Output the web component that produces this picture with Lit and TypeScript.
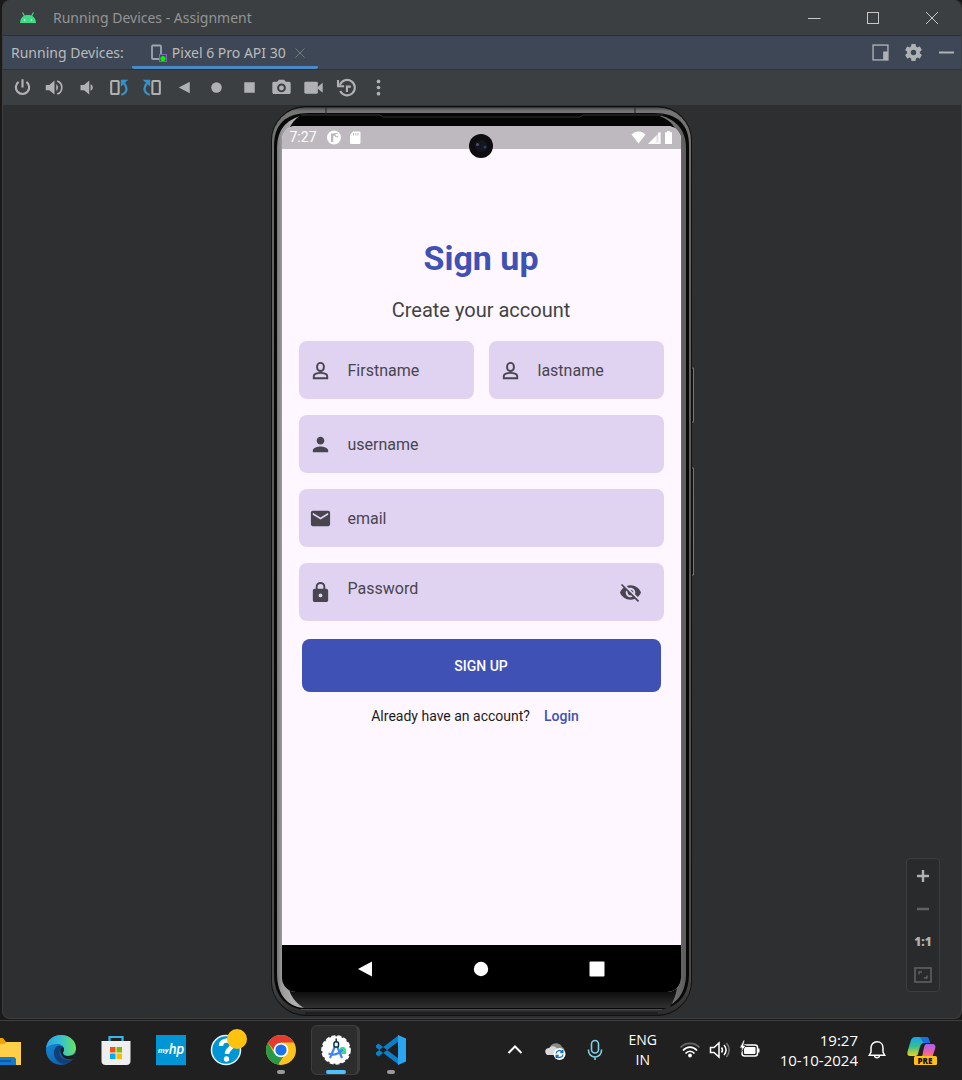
import { LitElement, html, svg, css } from "lit";
import { customElement, property, state } from "lit/decorators.js";

const toolIcons: Record<string, unknown> = {
  Power: svg`<path d="M7.500 5.700A7.600 7.600 0 1 0 16.500 5.700M12 2.500V12" fill="none" stroke="currentColor" stroke-width="2.500"/>`,
  "Volume up": svg`<path d="M2 9v6h4l6 5V4L6 9H2z"/><path d="M14 8.300v7.400c1.300-.7 2-2.100 2-3.700s-.7-3-2-3.700z"/><path d="M15 4.600c3.300.8 5.300 3.900 5.300 7.400s-2 6.600-5.300 7.400" fill="none" stroke="currentColor" stroke-width="2"/>`,
  "Volume down": svg`<path d="M4 9v6h4l6 5V4L8 9H4z"/><path d="M15.500 8.300v7.400c1.600-.7 2.600-2.100 2.600-3.700s-1-3-2.600-3.700z"/>`,
  "Rotate left": svg`<rect x="2.500" y="4.500" width="8.500" height="15" rx="1" fill="none" stroke="currentColor" stroke-width="2.400"/><path d="M14 20.300c4-1 6-3.300 6-6.800 0-2.600-1-4.500-3-6.500" fill="none" stroke="#3592c4" stroke-width="2.600"/><path d="M13.500 3.200H22L13.500 11z" fill="#3592c4"/>`,
  "Rotate right": svg`<rect x="13" y="4.500" width="8.500" height="15" rx="1" fill="none" stroke="currentColor" stroke-width="2.400"/><path d="M10 20.300c-4-1-6-3.300-6-6.800 0-2.600 1-4.500 3-6.500" fill="none" stroke="#3592c4" stroke-width="2.600"/><path d="M10.500 3.200H2L10.500 11z" fill="#3592c4"/>`,
  Back: svg`<path d="M18 5.500v13L5.500 12z"/>`,
  Home: svg`<circle cx="12" cy="12" r="6"/>`,
  Overview: svg`<rect x="6" y="6" width="12" height="12"/>`,
  Screenshot: svg`<path d="M9 3 7 5.500H3.500C2 5.500 1.500 6.300 1.500 7.500v10c0 1.300.7 2 2 2h17c1.300 0 2-.7 2-2v-10c0-1.200-.7-2-2-2H17L15 3zm3 4.500a5 5 0 1 1 0 10 5 5 0 0 1 0-10z" fill-rule="evenodd"/><circle cx="12" cy="12.500" r="2.800"/>`,
  Record: svg`<rect x="1.500" y="5.500" width="15.500" height="13.500" rx="1.500"/><path d="M17 11l5.500-4.500v11.500l-5.500-4.500z"/>`,
  Snapshots: svg`<path d="M4.500 9a8.800 8.800 0 1 1 .3 7M2.300 3.500v7h7M12.500 17v-6H17" fill="none" stroke="currentColor" stroke-width="2.400"/>`,
  More: svg`<circle cx="12" cy="5" r="2.100"/><circle cx="12" cy="12" r="2.100"/><circle cx="12" cy="19" r="2.100"/>`,
};

const fieldIcons: Record<string, unknown> = {
  outline: svg`<g fill="none" stroke="currentColor" stroke-width="2"><rect x="8.500" y="4" width="7" height="8.500" rx="3.500"/><path d="M5 20v-2.300c0-2 3.800-3.200 7-3.200s7 1.200 7 3.200V20z"/></g>`,
  person: svg`<path d="M12 12c2.200 0 4-1.800 4-4s-1.800-4-4-4-4 1.800-4 4 1.800 4 4 4zm0 2c-2.700 0-8 1.300-8 4v2h16v-2c0-2.700-5.300-4-8-4z"/>`,
  mail: svg`<path d="M20 4H4c-1.100 0-2 .9-2 2v12c0 1.100.9 2 2 2h16c1.100 0 2-.9 2-2V6c0-1.100-.9-2-2-2zm0 4-8 5-8-5V6l8 5 8-5v2z"/>`,
  lock: svg`<path d="M18 8h-1V6A5 5 0 0 0 7 6v2H6c-1.100 0-2 .9-2 2v10c0 1.100.9 2 2 2h12c1.100 0 2-.9 2-2V10c0-1.100-.9-2-2-2zm-6 9a2 2 0 1 1 0-4 2 2 0 0 1 0 4zM9 8V6a3 3 0 0 1 6 0v2z"/>`,
};

@customElement("form-field")
class FormField extends LitElement {
  @property() name = "";
  @property() icon = "person";
  @property({ type: Boolean }) secret = false;
  @state() private shown = false;

  static styles = css`
    :host { display: block; flex: 1; min-width: 0; }
    .field {
      display: flex; align-items: center; height: 58px; box-sizing: border-box;
      padding: 0 22px 0 10px; border-radius: 8px; background: #dfd3f1; color: #49454f;
    }
    .icon { width: 23px; height: 23px; flex: none; fill: currentColor; }
    .box {
      flex: 1; min-width: 0; height: 40px; margin: 0 0 0 16px; padding: 0; border: 0; outline: 0;
      background: none; color: #49454f; font: 16px Roboto, sans-serif;
    }
    .box::placeholder { color: #49454f; opacity: 1; }
    .secret .box { padding-bottom: 8px; }
    .eye { display: flex; padding: 0; border: 0; background: none; color: inherit; }
  `;

  render() {
    return html`<label class="field ${this.secret ? "secret" : ""}">
      <svg class="icon" viewBox="0 0 24 24" aria-hidden="true">${fieldIcons[this.icon]}</svg>
      <input class="box" aria-label=${this.name} placeholder=${this.name}
        type=${this.secret && !this.shown ? "password" : "text"} />
      ${this.secret
        ? html`<button class="eye" type="button" aria-label="Toggle password visibility" @click=${() => (this.shown = !this.shown)}>
            <svg class="icon" viewBox="0 0 24 24"><path d="M12 7c2.760 0 5 2.240 5 5 0 .65-.13 1.260-.36 1.830l2.920 2.920c1.510-1.260 2.700-2.890 3.430-4.750-1.730-4.390-6-7.500-11-7.500-1.400 0-2.740.25-3.980.7l2.160 2.160C10.740 7.130 11.350 7 12 7zM2 4.270l2.280 2.280.46.46C3.080 8.300 1.780 10.020 1 12c1.730 4.390 6 7.500 11 7.500 1.550 0 3.030-.3 4.380-.84l.42.42L19.730 22 21 20.730 3.270 3 2 4.270zM7.530 9.800l1.550 1.550c-.05.21-.08.43-.08.65 0 1.660 1.340 3 3 3 .22 0 .44-.03.65-.08l1.550 1.550c-.67.33-1.410.53-2.200.53-2.760 0-5-2.240-5-5 0-.79.2-1.530.53-2.200zm4.310-.78 3.150 3.150.02-.16c0-1.660-1.340-3-3-3l-.17.01z"/></svg>
          </button>`
        : ""}
    </label>`;
  }
}

@customElement("phone-device")
class PhoneDevice extends LitElement {
  static styles = css`
    :host {
      display: flex; position: relative; box-sizing: border-box; width: 421px; max-width: 100%;
      padding: 20px 11px 24px; font-family: Roboto, sans-serif;
    }
    .frame { position: absolute; inset: 0; width: 100%; height: 100%; overflow: visible; }
    .screen {
      position: relative; flex: 1; min-width: 0; display: flex; flex-direction: column;
      overflow: hidden; border-radius: 14px; background: #fef7ff;
    }
    .camera { position: absolute; top: 8px; left: 50%; margin-left: -12px; width: 24px; height: 24px; }
    .status {
      display: flex; align-items: center; height: 23px; padding: 0 7px 0 8px;
      background: #beb9bf; color: #fff; font-size: 14px; line-height: 23px;
    }
    .status svg { height: 15px; fill: #fff; }
    .left, .right { display: flex; align-items: center; }
    .left { flex: 1; gap: 7px; }
    .left span { margin-right: 3px; }
    .right { gap: 2px; }
    .form { flex: 1; display: flex; flex-direction: column; margin: 0; padding: 89px 17px 0; }
    .title { margin: 0; text-align: center; font-size: 34px; line-height: 40px; font-weight: 700; color: #3f51b5; }
    .sub { margin: 20px 0 19px; text-align: center; font-size: 20px; line-height: 24px; color: #424242; }
    .fields { display: flex; flex-direction: column; gap: 16px; }
    .pair { display: flex; gap: 15px; }
    .submit {
      height: 53px; margin: 18px 3px 0; border: 0; border-radius: 8px; background: #3f51b5;
      color: #fff; font: 500 14px Roboto, sans-serif;
    }
    .account { display: flex; justify-content: center; gap: 14px; margin: 14px 12px 0 0; font-size: 14px; line-height: 20px; color: #1d1b20; }
    .account a { color: #3f51b5; font-weight: 500; text-decoration: none; }
    .nav { display: grid; grid-template-columns: repeat(3, 1fr); justify-items: center; height: 47px; padding: 0 26px; background: #000; }
    .nav button { display: flex; align-items: center; padding: 0; border: 0; background: none; }
    .nav svg { width: 16px; height: 16px; fill: #fff; }
  `;

  render() {
    return html`
      <svg class="frame" viewBox="0 0 421 910" preserveAspectRatio="none" aria-hidden="true">
        <defs>
          <linearGradient id="rim" x1="0" x2="0" y1="0" y2="1">
            <stop offset="0" stop-color="#4a4a4a"/><stop offset=".004" stop-color="#757575"/><stop offset=".1" stop-color="#666"/>
            <stop offset=".96" stop-color="#4a4a4a"/><stop offset="1" stop-color="#2b2b2b"/>
          </linearGradient>
          <linearGradient id="side" x1="0" x2="1" y1="0" y2="0">
            <stop offset="0" stop-color="#777"/><stop offset=".012" stop-color="#9a9a9a"/><stop offset=".04" stop-color="#b0b0b0"/>
            <stop offset=".96" stop-color="#777"/><stop offset="1" stop-color="#5c5c5c"/>
          </linearGradient>
          <linearGradient id="chin" x1="0" x2="0" y1="0" y2="1">
            <stop offset="0" stop-color="#050505"/><stop offset=".98" stop-color="#0a0a0a"/><stop offset="1" stop-color="#303030"/>
          </linearGradient>
        </defs>
        <path d="M420 262h2.500v54H420zM420 362h2.500v107H420z" fill="#151515" stroke="#777"/>
        <rect x=".5" y=".5" width="420" height="909" rx="34" fill="#191919" stroke="#111"/>
        <rect x="1" y="1.500" width="419" height="907" rx="33" fill="url(#rim)"/>
        <path d="M3 40C3 18 15 7 38 7H383C406 7 418 18 418 40V868C418 892 404 904 382 904H39C17 904 3 892 3 868Z" fill="#080808"/>
        <path d="M6 42C6 24 15 14 30 10H391C405 14 415 24 415 42V868C415 890 402 902 386 902H35C18 902 6 890 6 868Z" fill="url(#side)"/>
        <path d="M16 40C16 26 18 17 30 9H386C401 14 407 22 407 40V866C407 884 404 894 398 902H33C20 894 16 884 16 866Z" fill="url(#chin)"/>
        <path d="M30 9H109l3 2H309l3-2H392" fill="none" stroke="#333"/>
        <path d="M55 1V8M364 1V8" stroke="#222"/>
        <path d="M30 903.500H391" stroke="#4d4d4d"/><path d="M34 907H387" stroke="#111"/>
      </svg>
      <div class="screen">
        <div class="status">
          <div class="left">
            <span>7:27</span>
            <svg viewBox="0 0 14 15"><path d="M7 .5a7 7 0 1 1 0 14 7 7 0 0 1 0-14zM4 3.500V12h2.300V6.200l1-.8 1.400 1.800h2.500V4L9.500 3z" fill-rule="evenodd"/><circle cx="9.800" cy="5" r="1.200"/></svg>
            <svg viewBox="0 0 14 15"><path d="M5 1.500h6c1 0 1.500.5 1.500 1.500v9.500c0 1-.5 1.500-1.500 1.500H3.500C2.500 14 2 13.500 2 12.500V5z"/><path d="M5.500 3v2.500M7.800 3v2.500M10 3v2.500" stroke="#beb9bf"/></svg>
          </div>
          <div class="right">
            <svg viewBox="0 0 15 15"><path d="M.5 4.500C4.500.5 10.500.5 14.500 4.500L7.500 13.500z"/></svg>
            <svg viewBox="0 0 13 15"><path d="M0 14 12.500 1.500V14z" opacity=".55"/><path d="M0 14 8.500 5.500V14zM10 2.500h2.500V14H8V12.500h2.500z" opacity=".9"/></svg>
            <svg viewBox="0 0 11 15"><path d="M4 1h3v1.200H9V14H2V2.200h2z"/></svg>
          </div>
        </div>
        <form class="form" @submit=${(e: Event) => e.preventDefault()}>
          <h1 class="title">Sign up</h1>
          <p class="sub">Create your account</p>
          <div class="fields">
            <div class="pair">
              <form-field name="Firstname" icon="outline"></form-field>
              <form-field name="lastname" icon="outline"></form-field>
            </div>
            <form-field name="username" icon="person"></form-field>
            <form-field name="email" icon="mail"></form-field>
            <form-field name="Password" icon="lock" secret></form-field>
          </div>
          <button class="submit">SIGN UP</button>
          <div class="account"><span>Already have an account?</span><a href="#login">Login</a></div>
        </form>
        <div class="nav">
          <button aria-label="Back"><svg viewBox="0 0 16 16"><path d="M15 .5v15L1 8z"/></svg></button>
          <button aria-label="Home"><svg viewBox="0 0 16 16"><circle cx="8" cy="8" r="7.200"/></svg></button>
          <button aria-label="Overview"><svg viewBox="0 0 16 16"><rect x=".5" y=".5" width="15" height="15" rx="1"/></svg></button>
        </div>
        <svg class="camera" viewBox="0 0 24 24" aria-hidden="true"><circle cx="12" cy="12" r="12" fill="#0d0d0f"/><circle cx="12" cy="12" r="6" fill="#15151f"/><circle cx="8.500" cy="10.500" r="1.500" fill="#4d5068"/><circle cx="16" cy="13" r="1.500" fill="#17446d"/></svg>
      </div>`;
  }
}

const apps = [
  { name: "File Explorer", mark: "", art: svg`<path d="M1 4h12l3 4h15v23H1z" fill="#f0a30a"/><path d="M1 10h13l3-2h13c1 0 1 0 1 1v22H1z" fill="#ffcf48"/><path d="M1 23h22c2 0 3 1 3 3v5H1z" fill="#1479d0"/><path d="M1 27h20" stroke="#0a4f94" stroke-width="1.500"/>` },
  { name: "Edge", mark: "", art: svg`<defs><linearGradient id="e1" x1="0" x2="1"><stop offset="0" stop-color="#2aa3e8"/><stop offset=".5" stop-color="#35c1d0"/><stop offset="1" stop-color="#6be35a"/></linearGradient><linearGradient id="e2" x1="0" x2="1" y1="0" y2="1"><stop offset="0" stop-color="#1592dc"/><stop offset="1" stop-color="#0c4f9c"/></linearGradient></defs><circle cx="16" cy="16" r="15" fill="url(#e2)"/><path d="M1 14C2 6 8 1 16 1c9 0 15 6 15 13 0 5-4 8-8 8-3 0-5-1-5-3 0-1 1-2 1-4 0-3-3-5-7-5-5 0-9 2-11 4z" fill="url(#e1)"/><path d="M12 12c-5 4-4 13 3 17 5 2 10 0 13-4-5 2-11 1-13-4-1-3 0-5 2-7 1 0 2 0 2 1 0-2-3-4-7-3z" fill="#123f78"/><path d="M18 19c0-1 1-2 1-4 0-1-1-2-2-2-2 2-2 5-1 7 2 5 7 6 12 5l2-3c2-2 1-3 0-2-2 1-4 2-7 2-3 0-5-1-5-3z" fill="#1b1f24"/>` },
  { name: "Microsoft Store", mark: "", art: svg`<path d="M9.500 8V3h13v5" fill="none" stroke="#38b6f1" stroke-width="2.200"/><path d="M1.500 7h29v20c0 2.500-1.500 4-4 4h-21c-2.500 0-4-1.500-4-4z" fill="#efefef"/><path d="M10 13h5.500v5.500H10z" fill="#f1511b"/><path d="M16.500 13H22v5.500h-5.500z" fill="#80bb01"/><path d="M10 19.500h5.500V25H10z" fill="#00adef"/><path d="M16.500 19.500H22V25h-5.500z" fill="#fbbc09"/>` },
  { name: "myHP", mark: "", art: svg`<rect x="1" y="1" width="30" height="30" fill="#0096d6"/><text x="3" y="19" fill="#fff" font-family="Roboto" font-size="8" font-weight="700" font-style="italic">my</text><text x="14" y="20" fill="#fff" font-family="Roboto" font-size="14" font-weight="500" font-style="italic">hp</text>` },
  { name: "HP Support", mark: "", art: svg`<circle cx="16" cy="16" r="14.500" fill="#0096d6" stroke="#e8f3f8" stroke-width="1.500"/><path d="M11 12c0-7 11-7 11-1 0 4-5 4-5 9" fill="none" stroke="#fff" stroke-width="4.500"/><circle cx="16.500" cy="25" r="2.700" fill="#fff"/><circle cx="27" cy="5" r="10" fill="#ffc20e"/>` },
  { name: "Chrome", mark: "idle", art: svg`<circle cx="16" cy="16" r="15" fill="#fcc31e"/><path d="M3 8.500A15 15 0 0 1 29 8.500H16L11 19z" fill="#e33b2e"/><path d="M3 8.500 9.500 20 16 23l-3 7.700A15 15 0 0 1 3 8.500z" fill="#279847"/><path d="M13 30.700 20 20l-4 1-7-2z" fill="#279847"/><circle cx="16" cy="16" r="7.300" fill="#fff"/><circle cx="16" cy="16" r="5.600" fill="#1a73e8"/>` },
  { name: "Android Studio", mark: "active", art: svg`<circle cx="16" cy="16" r="13.800" fill="#fff" stroke="#fff" stroke-width="2" stroke-dasharray="4 2"/><path d="M20 14c4-3 7 0 6 6h-8z" fill="#3ddc84"/><g fill="none" stroke="#4285f4" stroke-width="2.200"><path d="M15.500 11 10 24M16.500 11 22 24M8.500 19.500c5 2 10 1 14-4"/></g><rect x="14" y="8" width="4.500" height="5" rx="1" fill="#fff" stroke="#073042" stroke-width="1.500"/><path d="M16.200 4.500V8" stroke="#073042" stroke-width="1.500"/>` },
  { name: "VS Code", mark: "idle", art: svg`<path d="M1 11.500 3.500 9.500 24 25v6L1 13.500zM1 20.500 3.500 22.500 24 7V1L1 18.500z" fill="#0d7fc9"/><path d="M23 1l8 3.500v23L23 31z" fill="#2aa5f2"/>` },
];

@customElement("task-bar")
class TaskBar extends LitElement {
  static styles = css`
    :host {
      display: flex; height: 60px; overflow: hidden; box-sizing: border-box; border-top: 1px solid #3f3f3f; background: #202020;
      color: #fff; font-family: "Open Sans", "Noto Sans", sans-serif;
    }
    button { padding: 0; border: 0; background: none; color: inherit; font: inherit; }
    .apps { display: flex; flex: 1; margin-left: -22px; padding-bottom: 1px; }
    .app { position: relative; width: 55px; flex: none; display: grid; place-items: center; }
    .app svg { position: relative; width: 32px; height: 32px; overflow: visible; }
    .app.active::before {
      content: ""; position: absolute; inset: 4px 3px 4px; border: 1px solid #3d3d3d; border-right-width: 3px; border-radius: 6px; background: #2d2d2d;
    }
    .app.idle::after, .app.active::after {
      content: ""; position: absolute; bottom: 5px; left: 50%; width: 8px; height: 4px; margin-left: -4px; border-radius: 2px; background: #9a9a9a;
    }
    .app.active::after { width: 20px; margin-left: -10px; background: #4cc2ff; }
    .tray { display: flex; align-items: center; padding: 0 24px 2px 0; }
    .cell { width: 40px; display: flex; justify-content: center; }
    .narrow { width: 30px; }
    .cell svg { width: 22px; height: 22px; overflow: visible; }
    .lang { width: 56px; margin-right: 4px; text-align: center; }
    .lang, .clock { font-size: 14px; line-height: 20px; }
    .clock { margin: 0 9px 0 15px; text-align: right; font-size: 15px; }
    .bell, .copilot { display: flex; }
    .bell { margin-right: 19px; }
    .bell svg { width: 20px; height: 20px; }
    .copilot svg { width: 32px; height: 32px; }
    .line { fill: none; stroke: #fff; stroke-width: 1.500; }
    .bold { stroke-width: 2; }
  `;

  render() {
    return html`
      <div class="apps">
        ${apps.map((a) => html`<button class="app ${a.mark}" aria-label=${a.name}><svg viewBox="0 0 32 32">${a.art}</svg></button>`)}
      </div>
      <div class="tray">
        <button class="cell" aria-label="Hidden icons"><svg viewBox="0 0 22 22"><path class="line bold" d="M4.500 14 11 7.500 17.500 14"/></svg></button>
        <button class="cell" aria-label="OneDrive"><svg viewBox="0 0 22 22"><path d="M6 8c2-5 10-5 12 0 3 1 3 5 1 6H8z" fill="#8a8a8a"/><path d="M3 16C0 13 1 9 5 9c3-3 7-2 8 1v6z" fill="#d8d8d8"/><circle cx="15.500" cy="15" r="6" fill="#fff"/><path d="M12 14.500a3.600 3.600 0 0 1 6.500-1.500M19 15.500a3.600 3.600 0 0 1-6.500 1.500M18.800 11v2.500h-2.500M12.200 19v-2.500h2.500" fill="none" stroke="#1273c4" stroke-width="1.400"/></svg></button>
        <button class="cell" aria-label="Microphone"><svg viewBox="0 0 22 22"><g fill="none" stroke="#7fd0e6" stroke-width="1.600"><rect x="7.500" y="1.500" width="7" height="12.500" rx="3.500"/><path d="M4.500 10.500v1a6.500 6.500 0 0 0 13 0v-1M11 18v3"/></g></svg></button>
        <button class="lang">ENG<br />IN</button>
        <button class="cell narrow" aria-label="Wi-Fi"><svg viewBox="0 0 22 22"><g fill="none" stroke-width="1.700"><path d="M1.500 8.500c5-5.500 14-5.500 19 0" stroke="#666"/><path d="M4 11.500c4-4.500 10-4.500 14 0M6.500 14.500c2.500-3 6.500-3 9 0" stroke="#fff"/></g><circle cx="11" cy="16.500" r="1.900" fill="#fff"/></svg></button>
        <button class="cell narrow" aria-label="Volume"><svg viewBox="0 0 22 22"><path class="line" d="M1.500 8.500h3.500L10 4v14l-5-4.500H1.500z"/><path class="line" d="M12.500 8.500c1.200 1.500 1.200 3.500 0 5M15 6c2.500 3 2.500 7 0 10"/><path d="M17.500 4c3.500 4 3.500 10 0 14" fill="none" stroke="#777" stroke-width="1.500"/></svg></button>
        <button class="cell narrow" aria-label="Battery"><svg viewBox="0 0 22 22"><rect class="line" x="3" y="6" width="15.500" height="11" rx="2.500"/><rect x="5" y="8" width="11.500" height="7" rx="1" fill="#fff"/><path d="M19 9.500h1.500v4H19z" fill="#fff"/><path d="M4.500 1 .5 9H3l-1.500 5L7 6.500H4.500L6 1z" fill="#fff" stroke="#202020" stroke-width=".8"/></svg></button>
        <button class="clock">19:27<br />10-10-2024</button>
        <button class="bell" aria-label="Notifications"><svg viewBox="0 0 20 20"><path class="line" d="M10 1.800c3.500 0 6 2.600 6 6V12l1.700 3.200H2.300L4 12V7.800c0-3.400 2.500-6 6-6zM7.500 15.500c.3 3 4.700 3 5 0"/></svg></button>
        <button class="copilot" aria-label="Copilot"><svg viewBox="0 0 32 32"><defs><linearGradient id="c1" x1="0" x2="0" y1="0" y2="1"><stop offset="0" stop-color="#18a0f0"/><stop offset=".5" stop-color="#35c090"/><stop offset="1" stop-color="#f2d21c"/></linearGradient><linearGradient id="c2" x1="0" x2="0" y1="0" y2="1"><stop offset="0" stop-color="#a860f0"/><stop offset=".6" stop-color="#f060a0"/><stop offset="1" stop-color="#ff8a50"/></linearGradient></defs><path d="M9 3h11c3 0 3 3 4 6h-6c-3 0-4 3-6 11-1 2-2 2-4 2H4c-3 0-3-3-2-6L5 6c1-2 2-3 4-3z" fill="url(#c1)"/><path d="M13 3h7c3 0 3 3 4 6h-6c-2-1-2-5-5-6z" fill="#1c6fe0"/><path d="M20 10h6c3 0 4 2 3 5l-3 9H13c3-1 4-3 4-6 1-4 1-7 3-8z" fill="url(#c2)"/><rect x="8" y="22" width="23" height="9" rx="1.500" fill="#ffc20e"/><text x="19" y="29.500" text-anchor="middle" font-family="Open Sans" font-weight="800" font-size="8" fill="#111">PRE</text></svg></button>
      </div>`;
  }
}

@customElement("app-root")
class AppRoot extends LitElement {
  static styles = css`
    :host {
      display: flex; flex-direction: column; min-height: 100vh; background: #1a1a1a;
      color: #bbb; font-family: "Noto Sans", "Open Sans", sans-serif; font-size: 14px;
    }
    button { padding: 0; border: 0; background: none; color: inherit; font: inherit; }
    .window {
      flex: 1; display: flex; flex-direction: column; margin: 0 0 1px 2px; overflow: hidden;
      border: 1px solid #3c3e40; border-top: 0; border-radius: 8px; background: #2e2f31;
    }
    .titlebar { display: flex; align-items: center; height: 35px; padding-left: 16px; border-bottom: 1px solid #2d2f31; background: #3c3f41; color: #939596; }
    .titlebar .droid { width: 18px; height: 18px; margin-right: 16px; }
    .grow { flex: 1; }
    .caption { width: 59px; height: 35px; display: grid; place-items: center; color: #c8c8c8; }
    .caption svg { width: 14px; height: 14px; fill: none; stroke: currentColor; stroke-width: 1; }
    .tabs { display: flex; align-items: center; height: 33px; padding: 0 7px 0 8px; border-bottom: 1px solid #2f3133; background: #3d4755; }
    .tab { display: flex; align-items: center; height: 33px; box-sizing: border-box; margin-left: 8px; padding: 3px 12px 0 18px; border-bottom: 3px solid #4a88c7; border-radius: 2px; }
    .tab .device { width: 18px; height: 18px; margin-right: 4px; }
    .close { display: flex; margin-left: 8px; }
    .close svg { width: 12px; height: 12px; stroke: #747a80; }
    .action { width: 33px; display: grid; place-items: center; color: #afb1b3; }
    .action:last-child { width: 32px; margin-right: -8px; }
    .action svg { width: 17px; height: 17px; }
    .tools { display: grid; grid-template-columns: repeat(12, 1fr); width: 389px; height: 35px; padding-left: 3px; }
    .toolbar { background: #3c3f41; }
    .tool { display: grid; place-items: center; color: #afb1b3; }
    .tool svg { width: 21px; height: 21px; fill: currentColor; }
    .stage { position: relative; flex: 1; display: flex; justify-content: center; padding: 1px 2px 2px 0; }
    .zoom {
      position: absolute; right: 21px; bottom: 26px; display: flex; flex-direction: column; width: 34px; box-sizing: border-box;
      border: 1px solid #3d3e40; border-radius: 4px; background: #292a2b; color: #afb1b3;
    }
    .zoom button { height: 33px; display: grid; place-items: center; font: 800 12px "Open Sans", sans-serif; }
    .zoom .off { color: #5f6163; }
    .zoom svg { width: 18px; height: 18px; fill: none; stroke: currentColor; }
  `;

  render() {
    return html`
      <main class="window">
        <header class="titlebar">
          <svg class="droid" viewBox="0 0 18 18"><path d="M1 14C1.300 8.500 4.500 6 9 6s7.700 2.500 8 8z" fill="#3ddc84"/><path d="M3.500 3.500 5.500 7M14.500 3.500 12.500 7" stroke="#3ddc84" stroke-width="1.200"/><circle cx="5.500" cy="11" r=".8" fill="#fff"/><circle cx="12.500" cy="11" r=".8" fill="#fff"/></svg>
          <span class="grow">Running Devices - Assignment</span>
          <button class="caption" aria-label="Minimize"><svg viewBox="0 0 14 14"><path d="M1 7.500h12.500"/></svg></button>
          <button class="caption" aria-label="Maximize"><svg viewBox="0 0 14 14"><rect x="1.500" y="1.500" width="11" height="11"/></svg></button>
          <button class="caption" aria-label="Close"><svg viewBox="0 0 14 14"><path d="M1 1l12 12M13 1 1 13"/></svg></button>
        </header>
        <nav class="tabs">
          <span>Running Devices:</span>
          <div class="tab">
            <svg class="device" viewBox="0 0 18 18"><rect x="2" y="1.500" width="9" height="13.500" rx="1" fill="none" stroke="#9aa7b0" stroke-width="1.800"/><rect x="9.500" y="10.500" width="7" height="7" fill="#3d4755" stroke="#8d5fc0"/><circle cx="13" cy="14.500" r="2.600" fill="#00f500"/></svg>
            <span>Pixel 6 Pro API 30</span>
            <button class="close" aria-label="Close tab"><svg viewBox="0 0 12 12"><path d="M1.500 1.500l9 9M10.500 1.500l-9 9"/></svg></button>
          </div>
          <span class="grow"></span>
          <button class="action" aria-label="Window layout"><svg viewBox="0 0 16 16"><rect x="1" y="1" width="14" height="14" fill="none" stroke="#afb1b3" stroke-width="1.300"/><path d="M10.500 7H15v8h-4.500z" fill="#afb1b3"/></svg></button>
          <button class="action" aria-label="Settings"><svg viewBox="2 2 20 20" fill="currentColor"><path d="M19.430 12.980c.04-.32.07-.64.07-.98s-.03-.66-.07-.98l2.110-1.650c.19-.15.24-.42.12-.64l-2-3.460c-.12-.22-.39-.3-.61-.22l-2.490 1c-.52-.4-1.080-.73-1.690-.98l-.38-2.650C14.460 2.180 14.250 2 14 2h-4c-.25 0-.46.18-.49.42l-.38 2.650c-.61.25-1.170.59-1.690.98l-2.490-1c-.23-.09-.49 0-.61.22l-2 3.460c-.13.22-.07.49.12.64l2.110 1.650c-.04.32-.07.65-.07.98s.03.66.07.98l-2.110 1.650c-.19.15-.24.42-.12.64l2 3.460c.12.22.39.3.61.22l2.490-1c.52.4 1.080.73 1.690.98l.38 2.650c.03.24.24.42.49.42h4c.25 0 .46-.18.49-.42l.38-2.650c.61-.25 1.170-.59 1.690-.98l2.490 1c.23.09.49 0 .61-.22l2-3.460c.12-.22.07-.49-.12-.64l-2.110-1.650zM12 15.200a3.200 3.200 0 1 1 0-6.400 3.200 3.200 0 0 1 0 6.400z"/></svg></button>
          <button class="action" aria-label="Hide"><svg viewBox="0 0 17 17"><path d="M1 8.500h15" stroke="currentColor" stroke-width="2"/></svg></button>
        </nav>
        <div class="toolbar">
          <div class="tools">
            ${Object.entries(toolIcons).map(([name, art]) => html`<button class="tool" aria-label=${name}><svg viewBox="0 0 24 24">${art}</svg></button>`)}
          </div>
        </div>
        <section class="stage">
          <phone-device></phone-device>
          <div class="zoom">
            <button aria-label="Zoom in"><svg viewBox="0 0 18 18"><path d="M3 9h12M9 3v12" stroke-width="2.400"/></svg></button>
            <button class="off" aria-label="Zoom out"><svg viewBox="0 0 18 18"><path d="M3 9h12" stroke-width="2.400"/></svg></button>
            <button>1:1</button>
            <button class="off" aria-label="Fit to screen"><svg viewBox="0 0 18 18"><rect x="1" y="2" width="16" height="14" stroke-width="1.600"/><path d="M5 8.500V6h3M13 9.500V12h-3" stroke-width="1.400"/></svg></button>
          </div>
        </section>
      </main>
      <task-bar></task-bar>`;
  }
}
